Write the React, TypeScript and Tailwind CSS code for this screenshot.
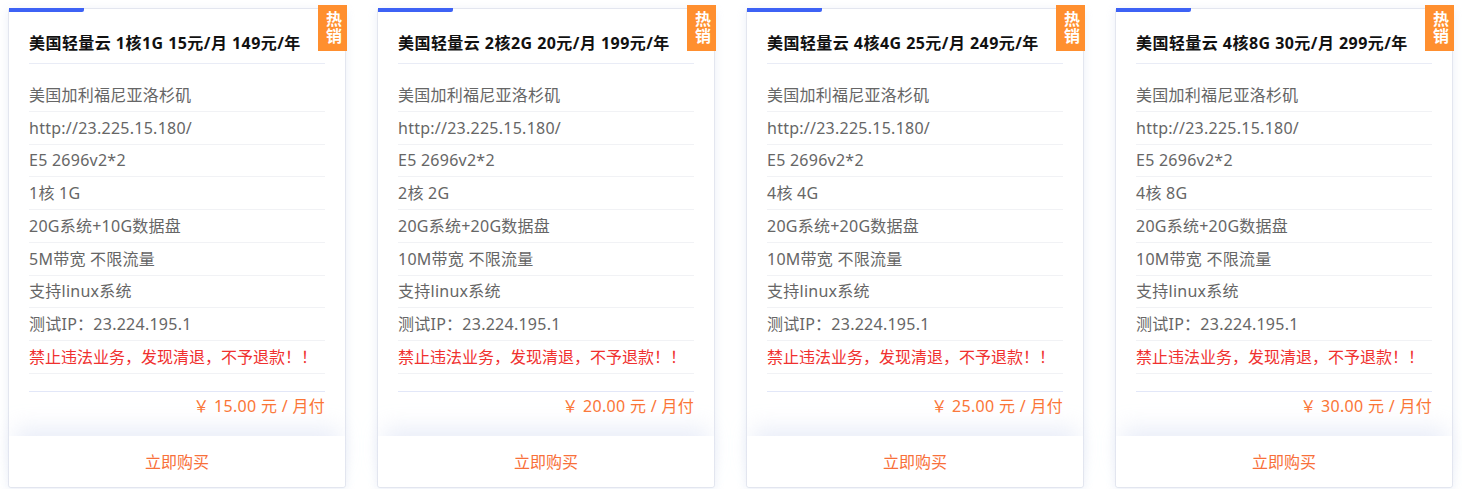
const plans = [
  { title: "美国轻量云 1核1G 15元/月 149元/年", cpu: "1核 1G", disk: "20G系统+10G数据盘", bw: "5M带宽 不限流量", price: "15.00" },
  { title: "美国轻量云 2核2G 20元/月 199元/年", cpu: "2核 2G", disk: "20G系统+20G数据盘", bw: "10M带宽 不限流量", price: "20.00" },
  { title: "美国轻量云 4核4G 25元/月 249元/年", cpu: "4核 4G", disk: "20G系统+20G数据盘", bw: "10M带宽 不限流量", price: "25.00" },
  { title: "美国轻量云 4核8G 30元/月 299元/年", cpu: "4核 8G", disk: "20G系统+20G数据盘", bw: "10M带宽 不限流量", price: "30.00" },
]

function PlanCard({ plan }: { plan: (typeof plans)[number] }) {
  const rows = [
    "美国加利福尼亚洛杉矶",
    "http://23.225.15.180/",
    "E5 2696v2*2",
    plan.cpu,
    plan.disk,
    plan.bw,
    "支持linux系统",
    "测试IP：23.224.195.1",
  ]

  return (
    <div className="relative w-[338px] h-[480px] shrink-0 bg-white border border-[#e3e6ef] rounded-[3px] shadow-[0_2px_10px_rgba(210,218,238,0.45)] flex flex-col">
      <div className="absolute left-0 top-[-1px] w-[75px] h-[4px] bg-[#3d62f5] rounded-br-[2px]" />
      <div className="absolute right-[-2px] top-[-4px] w-[29px] h-[46px] bg-[#ff8f2f] text-white font-bold text-[16px] leading-[29px] flex items-center justify-center">
        <span className="[writing-mode:vertical-rl] tracking-[1px]">热销</span>
      </div>

      <div className="px-5 flex-1">
        <div className="pt-[23px] pb-[9px] border-b border-[#e9ecf6] text-[16px] leading-[22px] font-bold text-[#111] tracking-[0.45px]">
          <span>{plan.title}</span>
        </div>

        <div className="mt-[15px]">
          {rows.map((r, i) => (
            <div
              key={i}
              className="h-[32.75px] flex items-center border-b border-[#f1f2f5] text-[16px] text-[#666] tracking-[0.25px]"
            >
              {r}
            </div>
          ))}
          <div className="h-[32.75px] flex items-center border-b border-[#f1f2f5] text-[16px] text-[#f0312f]">
            禁止违法业务，发现清退，不予退款！！
          </div>
        </div>

        <div className="mt-[17px] border-t border-[#e2e7f8] pt-[2px] text-right text-[16px] leading-[24px] text-[#fb7535] tracking-[0.3px]">
          ￥ {plan.price} 元 / 月付
        </div>
      </div>

      <div className="h-[51px] bg-white rounded-b-[3px] flex items-center justify-center text-[16px] text-[#f8703a] shadow-[0_-14px_22px_-6px_rgba(225,231,245,0.75)]">
        立即购买
      </div>
    </div>
  )
}

export default function App() {
  return (
    <div
      className="w-[1462px] h-[489px] bg-white overflow-hidden"
      style={{ fontFamily: '"Noto Sans", "Noto Sans CJK SC", sans-serif' }}
    >
      <div className="flex gap-[31px] pl-[8px] pt-[8px]">
        {plans.map((p, i) => (
          <PlanCard key={i} plan={p} />
        ))}
      </div>
    </div>
  )
}
